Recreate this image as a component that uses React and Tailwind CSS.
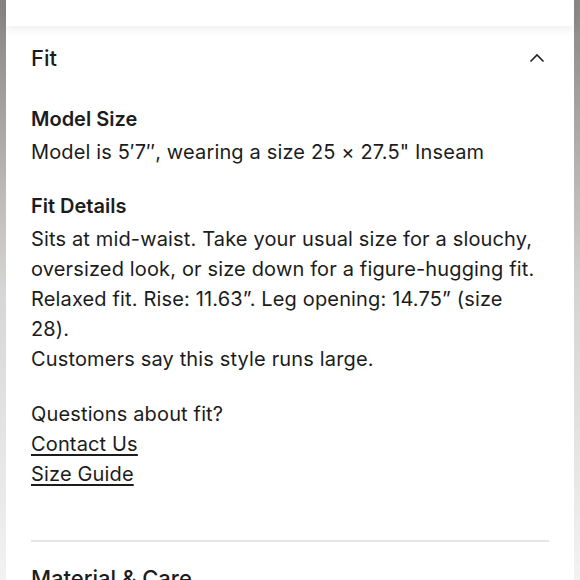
export default function App() {
  return (
    <div
      className="flex w-[580px] h-[580px] overflow-hidden bg-white text-[#1c1c1c]"
      style={{ fontFamily: "Inter, 'Noto Sans', sans-serif" }}
    >
      <div className="w-[6px] shrink-0 bg-gradient-to-b from-[#878380] via-[#d8d6d4] to-[#f2f2f2]" />
      <div className="flex-1 flex flex-col bg-white">
        <div className="h-[26px] shrink-0 bg-white relative z-10 shadow-[0_3px_10px_rgba(0,0,0,0.07)]" />
        <div className="flex flex-col px-[25px]">
          <div className="flex items-center justify-between h-[64px]">
            <span className="text-[22px] font-medium">Fit</span>
            <svg width="16" height="10" viewBox="0 0 16 10" className="mr-[4px]" fill="none" stroke="#222" strokeWidth="1.6">
              <path d="M1.5 8.5 L8 2 L14.5 8.5" />
            </svg>
          </div>
          <div className="w-[514px] text-[20px] leading-[30px] tracking-[0.15px]">
            <div className="mt-[14px] font-semibold text-[20px] tracking-[0px]">Model Size</div>
            <div className="mt-[3px]">Model is 5′7″, wearing a size 25 × 27.5" Inseam</div>
            <div className="mt-[24px] font-semibold text-[20px] tracking-[0px]">Fit Details</div>
            <div className="mt-[3px]">
              Sits at mid-waist. Take your usual size for a slouchy, oversized look, or size down for a figure-hugging fit. Relaxed fit. Rise: 11.63”. Leg opening: 14.75” (size 28).
            </div>
            <div>Customers say this style runs large.</div>
            <div className="mt-[25px]">Questions about fit?</div>
            <div><span className="underline underline-offset-[3px]">Contact Us</span></div>
            <div><span className="underline underline-offset-[3px]">Size Guide</span></div>
          </div>
          <div className="mt-[51px] h-[2px] bg-[#e6e6e6]" />
          <div className="mt-[20px] text-[22px] font-medium">Material &amp; Care</div>
        </div>
      </div>
      <div className="w-[6px] shrink-0 bg-gradient-to-b from-[#8a8684] via-[#d6d4d2] to-[#f2f2f2]" />
    </div>
  );
}
